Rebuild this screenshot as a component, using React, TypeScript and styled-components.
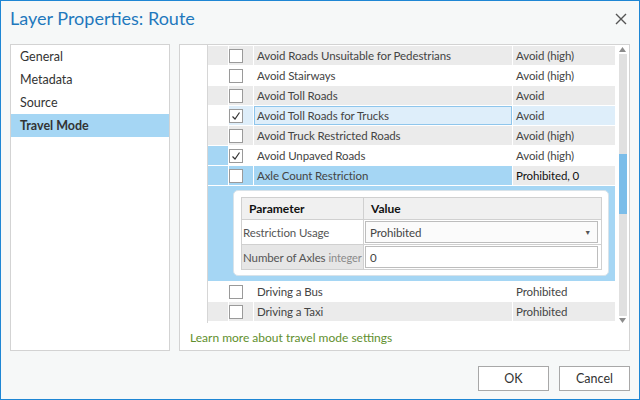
import React from 'react'
import styled, { createGlobalStyle } from 'styled-components'

const GlobalStyle = createGlobalStyle`
  body {
    margin: 0;
    font-family: Lato, "Open Sans", sans-serif;
  }
`

type RowType = {
  name: string
  value: string
  checked?: boolean
  bg: 'gray' | 'white' | 'selected' | 'expanded'
  indentBlue?: boolean
}

const rows: Array<RowType> = [
  { name: 'Avoid Roads Unsuitable for Pedestrians', value: 'Avoid (high)', bg: 'gray' },
  { name: 'Avoid Stairways', value: 'Avoid (high)', bg: 'white' },
  { name: 'Avoid Toll Roads', value: 'Avoid', bg: 'gray' },
  { name: 'Avoid Toll Roads for Trucks', value: 'Avoid', bg: 'selected', checked: true },
  { name: 'Avoid Truck Restricted Roads', value: 'Avoid (high)', bg: 'gray' },
  { name: 'Avoid Unpaved Roads', value: 'Avoid (high)', bg: 'white', checked: true, indentBlue: true },
  { name: 'Axle Count Restriction', value: 'Prohibited, 0', bg: 'expanded', indentBlue: true },
]

// last one is only peeking in at the bottom edge, so no text
const rowsAfter: Array<RowType> = [
  { name: 'Driving a Bus', value: 'Prohibited', bg: 'white' },
  { name: 'Driving a Taxi', value: 'Prohibited', bg: 'gray' },
  { name: '', value: '', bg: 'white' },
]

const BLUE = '#a5d6f4'
const GRAY = '#ebebeb'
const SEL = '#deeefa'

const Window = styled.div`
  width: 640px;
  height: 400px;
  box-sizing: border-box;
  border: 1px solid #1e86d4;
  background: #f6f8f8;
  display: flex;
  flex-direction: column;
  color: #333;
  font-size: 12px;
`

const TitleBar = styled.div`
  height: 43px;
  box-sizing: border-box;
  padding: 5px 12px 0 9px;
  display: flex;
  justify-content: space-between;
  align-items: flex-start;
`

const Title = styled.div`
  font-size: 18px;
  line-height: 24px;
  color: #1f78bd;
`

const CloseButton = styled.div`
  margin-top: 7px;
  width: 12px;
  height: 12px;
  display: flex;
`

const Body = styled.div`
  height: 307px;
  display: flex;
  gap: 9px;
  padding: 0 9px;
`

const Panel = styled.div`
  box-sizing: border-box;
  border: 1px solid #d3d3d3;
  background: #fff;
`

const NavPanel = styled(Panel)`
  width: 160px;
`

const NavItem = styled.div<{ $active?: boolean }>`
  height: 23px;
  line-height: 23px;
  padding-left: 9px;
  font-size: 12.5px;
  font-weight: ${(p) => (p.$active ? 700 : 400)};
  background: ${(p) => (p.$active ? BLUE : 'transparent')};
  color: #333;
`

const ContentPanel = styled(Panel)`
  flex: 1;
  display: flex;
  flex-direction: column;
`

const TableArea = styled.div`
  height: 278px;
  display: flex;
  gap: 1px;
  padding-left: 27px;
`

const Table = styled.div`
  width: 407px;
  border-left: 1px solid #d6d6d6;
  overflow: hidden;
  background: #fff;
  font-size: 11.5px;
  letter-spacing: -0.1px;
`

const TopGap = styled.div`
  height: 1px;
`

const Row = styled.div`
  display: grid;
  grid-template-columns: 20px 24px 258px 102px;
  column-gap: 1px;
  height: 19px;
  margin-bottom: 1px;
  background: #fff;
`

const Cell = styled.div<{ $bg: string; $outline?: boolean; $dark?: boolean }>`
  background: ${(p) => p.$bg};
  display: flex;
  align-items: center;
  box-sizing: border-box;
  white-space: nowrap;
  overflow: hidden;
  color: ${(p) => (p.$dark ? '#111' : '#444')};
  border: ${(p) => (p.$outline ? '1px solid #8fc6ec' : 'none')};
  padding-left: ${(p) => (p.$outline ? '2px' : '3px')};
`

const CheckCell = styled.div<{ $bg: string }>`
  background: ${(p) => p.$bg};
  display: flex;
  align-items: center;
`

const Box = styled.div`
  width: 14px;
  height: 14px;
  box-sizing: border-box;
  border: 1px solid #9a9a9a;
  background: #fff;
  display: flex;
  align-items: center;
  justify-content: center;
`

const Detail = styled.div`
  height: 95px;
  box-sizing: border-box;
  background: ${BLUE};
  padding: 4px 6px 0 25px;
  margin-bottom: 1px;
`

const Card = styled.div`
  height: 86px;
  box-sizing: border-box;
  background: #fff;
  border: 1px solid #d8e3ea;
  border-radius: 5px;
  padding: 6px 7px 0 7px;
`

const ParamGrid = styled.div`
  display: grid;
  grid-template-columns: 121px 1fr;
  grid-template-rows: 21px 24px 24px;
  gap: 1px;
  background: #d0d0d0;
  border: 1px solid #d0d0d0;
  width: 359px;
`

const HeadCell = styled.div`
  background: #f0f0f0;
  font-weight: 700;
  font-size: 12px;
  letter-spacing: 0;
  color: #111;
  display: flex;
  align-items: center;
  padding-left: 7px;
`

const LabelCell = styled.div<{ $shade?: boolean }>`
  background: ${(p) => (p.$shade ? '#e6e6e6' : '#fff')};
  color: #555;
  display: flex;
  align-items: center;
  padding-left: 1px;
  white-space: nowrap;
  overflow: hidden;
`

const TypeHint = styled.span`
  color: #8a8a8a;
  font-size: 11px;
  margin-left: 3px;
`

const ValueCell = styled.div`
  background: #fff;
  display: flex;
  padding: 1px 3px 1px 1px;
`

const Field = styled.div<{ $select?: boolean }>`
  flex: 1;
  box-sizing: border-box;
  border: 1px solid #bdbdbd;
  background: ${(p) => (p.$select ? '#fbfbfb' : '#fff')};
  display: flex;
  align-items: center;
  justify-content: space-between;
  padding: 0 6px 0 4px;
  color: #444;
`

const Caret = styled.span`
  font-size: 7px;
  color: #555;
`

const ScrollBar = styled.div`
  width: 13px;
  display: flex;
  flex-direction: column;
  align-items: center;
  padding-top: 2px;
  box-sizing: border-box;
`

const Track = styled.div`
  flex: 1;
  width: 8px;
  background: #e0e0e0;
  margin: 2px 0;
`

const Thumb = styled.div`
  margin-top: 100px;
  height: 60px;
  background: #7bbde9;
`

const LinkRow = styled.div`
  flex: 1;
  display: flex;
  align-items: center;
  padding-left: 10px;
  padding-top: 2px;
`

const Link = styled.a`
  color: #5f8f2e;
  font-size: 12px;
  text-decoration: none;
`

const Footer = styled.div`
  display: flex;
  justify-content: flex-end;
  gap: 10px;
  padding: 15px 9px 0 0;
`

const Button = styled.button`
  width: 71px;
  height: 25px;
  box-sizing: border-box;
  border: 1px solid #a8a8a8;
  background: #fff;
  font-family: Lato, sans-serif;
  font-size: 12.5px;
  color: #333;
`

const Triangle = ({ down }: { down?: boolean }) => (
  <svg width="7" height="5" viewBox="0 0 7 5">
    <polygon points={down ? '0,0 7,0 3.5,5' : '0,5 7,5 3.5,0'} fill="#8c8c8c" />
  </svg>
)

const CheckBox = ({ checked }: { checked?: boolean }) => (
  <Box>
    {checked && (
      <svg width="10" height="10" viewBox="0 0 10 10">
        <path d="M1.5 5.5 L4 8 L8.5 1.5" stroke="#333" strokeWidth="1.2" fill="none" />
      </svg>
    )}
  </Box>
)

const bgFor = (bg: RowType['bg']) => {
  if (bg === 'gray') return GRAY
  if (bg === 'selected') return SEL
  if (bg === 'expanded') return BLUE
  return '#fff'
}

const TableRow = ({ row }: { row: RowType }) => {
  const base = bgFor(row.bg)
  const indent = row.indentBlue ? BLUE : row.bg === 'selected' ? '#fff' : base
  const check = row.bg === 'white' ? '#fff' : base
  const value = row.bg === 'expanded' ? GRAY : base
  return (
    <Row>
      <CheckCell $bg={indent} />
      <CheckCell $bg={check}>
        <CheckBox checked={row.checked} />
      </CheckCell>
      <Cell $bg={base} $outline={row.bg === 'selected'}>
        {row.name}
      </Cell>
      <Cell $bg={value} $dark={row.bg === 'expanded'}>
        {row.value}
      </Cell>
    </Row>
  )
}

const App: React.FC = () => {
  return (
    <Window>
      <GlobalStyle />
      <TitleBar>
        <Title>Layer Properties: Route</Title>
        <CloseButton>
          <svg width="12" height="12" viewBox="0 0 12 12">
            <path d="M1 1 L11 11 M11 1 L1 11" stroke="#555" strokeWidth="1.4" />
          </svg>
        </CloseButton>
      </TitleBar>
      <Body>
        <NavPanel>
          <NavItem>General</NavItem>
          <NavItem>Metadata</NavItem>
          <NavItem>Source</NavItem>
          <NavItem $active>Travel Mode</NavItem>
        </NavPanel>
        <ContentPanel>
          <TableArea>
            <Table>
              <TopGap />
              {rows.map((r, i) => (
                <TableRow key={i} row={r} />
              ))}
              <Detail>
                <Card>
                  <ParamGrid>
                    <HeadCell>Parameter</HeadCell>
                    <HeadCell>Value</HeadCell>
                    <LabelCell>Restriction Usage</LabelCell>
                    <ValueCell>
                      <Field $select>
                        Prohibited
                        <Caret>▼</Caret>
                      </Field>
                    </ValueCell>
                    <LabelCell $shade>
                      Number of Axles<TypeHint>integer</TypeHint>
                    </LabelCell>
                    <ValueCell>
                      <Field>0</Field>
                    </ValueCell>
                  </ParamGrid>
                </Card>
              </Detail>
              {rowsAfter.map((r, i) => (
                <TableRow key={i} row={r} />
              ))}
            </Table>
            <ScrollBar>
              <Triangle />
              <Track>
                <Thumb />
              </Track>
              <Triangle down />
            </ScrollBar>
          </TableArea>
          <LinkRow>
            <Link>Learn more about travel mode settings</Link>
          </LinkRow>
        </ContentPanel>
      </Body>
      <Footer>
        <Button>OK</Button>
        <Button>Cancel</Button>
      </Footer>
    </Window>
  )
}

export default App
